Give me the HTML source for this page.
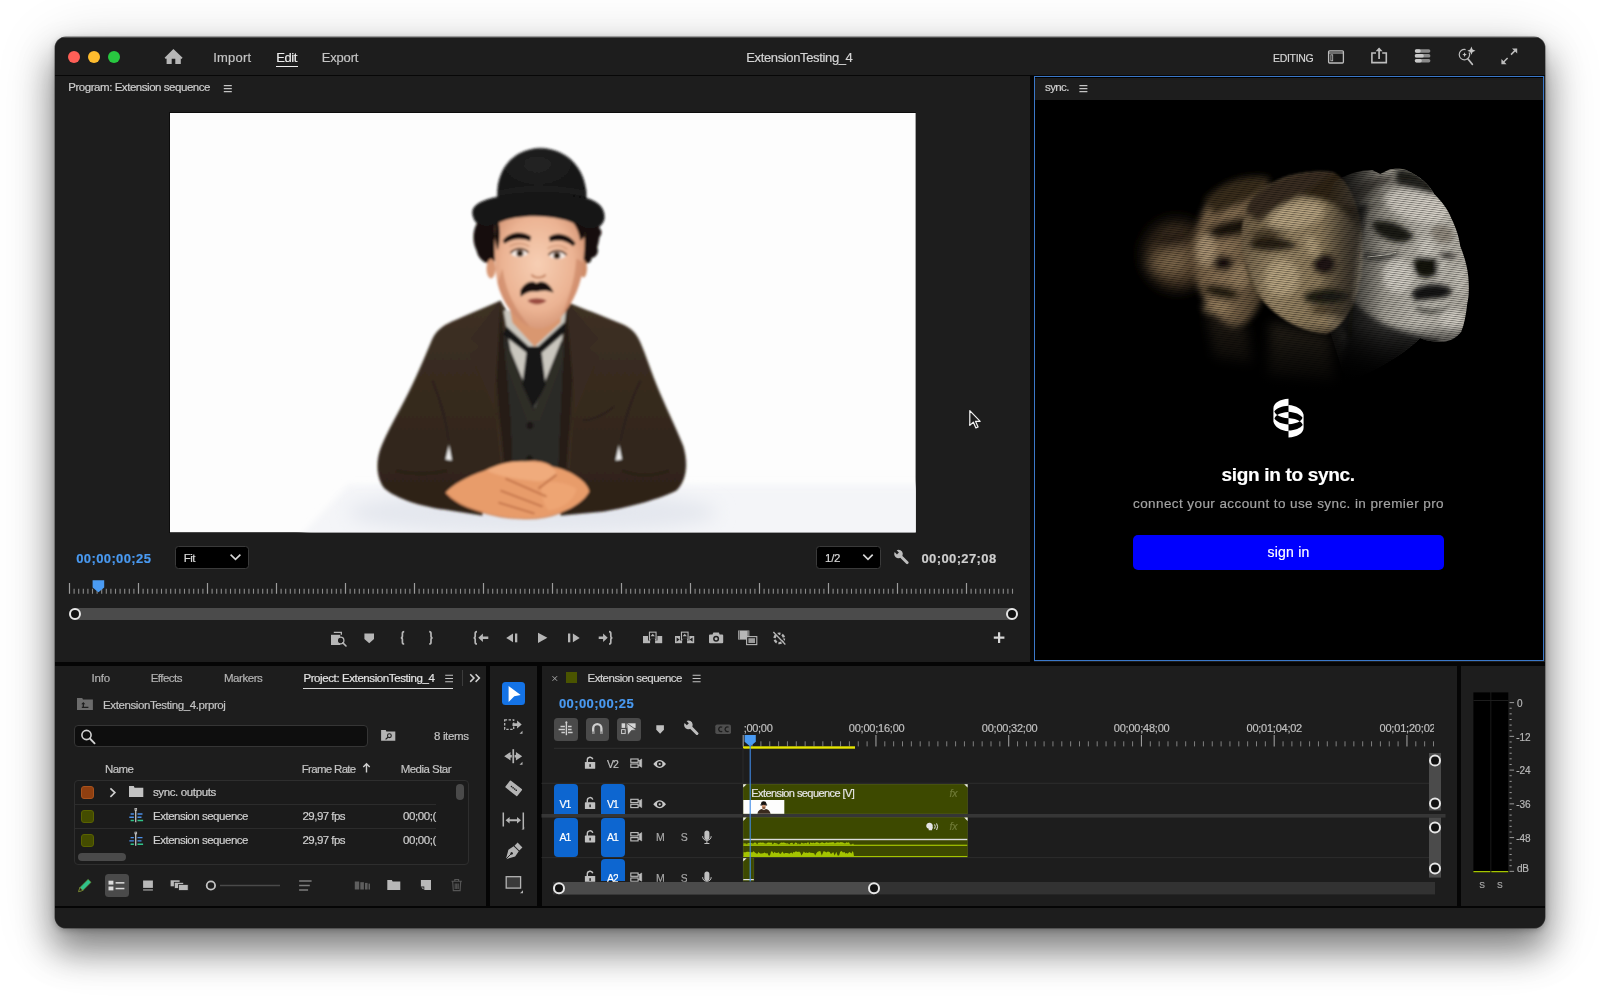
<!DOCTYPE html>
<html lang="en">
<head>
<meta charset="utf-8">
<title>ExtensionTesting_4</title>
<style>
html,body{margin:0;padding:0;background:#fff;}
body{width:1600px;height:1001px;overflow:hidden;position:relative;font-family:"Liberation Sans",sans-serif;}
#stage{position:absolute;left:0;top:0;width:1600px;height:1001px;overflow:hidden;}
.a{position:absolute;}
.t{position:absolute;white-space:pre;line-height:1;font-family:"Liberation Sans",sans-serif;-webkit-text-stroke:.18px;}
#win{position:absolute;left:55px;top:37px;width:1490px;height:891px;border-radius:11px;background:#1d1d1d;
 box-shadow:0 0 0 0.5px rgba(0,0,0,.55),0 2px 6px rgba(0,0,0,.25),0 22px 34px 2px rgba(0,0,0,.42),0 10px 60px rgba(0,0,0,.18);}
#clip{position:absolute;left:55px;top:37px;width:1490px;height:891px;border-radius:11px;overflow:hidden;}
#clip .i{position:absolute;left:-55px;top:-37px;width:1600px;height:1001px;}
svg{position:absolute;overflow:visible;}
</style>
</head>
<body>
<div id="stage">
<div id="win"></div>
<!-- window chrome: everything positioned in page coordinates, clipped to the rounded window -->
<div id="clip"><div class="i">
 <!-- top highlight -->
 <div class="a" style="left:55px;top:37px;width:1490px;height:1px;background:#5a5a5a;opacity:.8"></div>
 <!-- title bar bottom line -->
 <div class="a" style="left:55px;top:75px;width:1490px;height:1px;background:#070707"></div>
 <!-- traffic lights -->
 <div class="a" style="left:68px;top:50.5px;width:12px;height:12px;border-radius:50%;background:#fe5f57"></div>
 <div class="a" style="left:88px;top:50.5px;width:12px;height:12px;border-radius:50%;background:#febc2e"></div>
 <div class="a" style="left:107.75px;top:50.5px;width:12px;height:12px;border-radius:50%;background:#28c840"></div>
 <!-- Edit underline -->
 <div class="a" style="left:276px;top:65.7px;width:21.5px;height:1.8px;background:#ececec"></div>

 <!-- separators (black gutters) -->
 <div class="a" style="left:55px;top:661.5px;width:1490px;height:4.5px;background:#050505"></div>
 <div class="a" style="left:1029.5px;top:76px;width:4px;height:586px;background:#050505"></div>
 <div class="a" style="left:486px;top:666px;width:4px;height:240px;background:#050505"></div>
 <div class="a" style="left:537px;top:666px;width:4.5px;height:240px;background:#050505"></div>
 <div class="a" style="left:1457.3px;top:666px;width:4px;height:240px;background:#050505"></div>
 <div class="a" style="left:55px;top:905.5px;width:1490px;height:2px;background:#050505"></div>

 <!-- program monitor: video frame placeholder -->
 <div class="a" style="left:169.5px;top:112.5px;width:745.8px;height:419.5px;background:#fdfdfd;box-shadow:0 0 0 1px #0c0c0c"></div>

 <!-- Fit dropdown -->
 <div class="a" style="left:175px;top:546.3px;width:73.7px;height:22.4px;box-sizing:border-box;background:#000;border:1px solid #3a3a3a;border-radius:3.5px"></div>
 <!-- 1/2 dropdown -->
 <div class="a" style="left:816.4px;top:546.3px;width:64.6px;height:22.4px;box-sizing:border-box;background:#000;border:1px solid #3a3a3a;border-radius:3.5px"></div>
 <!-- program scrollbar -->
 <div class="a" style="left:69px;top:607.8px;width:949px;height:12.6px;background:#4b4b4b;border-radius:6px"></div>
 <div class="a" style="left:69px;top:608px;width:12px;height:12px;box-sizing:border-box;border:2px solid #e6e6e6;border-radius:50%;background:#111"></div>
 <div class="a" style="left:1005.5px;top:608px;width:12px;height:12px;box-sizing:border-box;border:2px solid #e6e6e6;border-radius:50%;background:#111"></div>

 <!-- sync panel -->
 <div class="a" style="left:1033.5px;top:76.5px;width:1510.5px;height:0"></div>
 <div class="a" style="left:1033.5px;top:76.3px;width:510.5px;height:585px;box-sizing:border-box;border:1.3px solid #3b78c9;background:#000"></div>
 <div class="a" style="left:1034.8px;top:77.6px;width:507.9px;height:22.4px;background:#1d1d1d"></div>
 <div class="a" style="left:1133px;top:534.9px;width:311px;height:35.1px;border-radius:5px;background:#0000fe"></div>

 <!-- project panel -->
 <div class="a" style="left:303px;top:687.6px;width:150px;height:1.5px;background:#d8d8d8"></div>
 <div class="a" style="left:462.3px;top:670px;width:1px;height:16px;background:#3c3c3c"></div>
 <div class="a" style="left:73.7px;top:724.6px;width:294.8px;height:22.9px;box-sizing:border-box;background:#0e0e0e;border:1px solid #353535;border-radius:4px"></div>
 <div class="a" style="left:73.7px;top:779.6px;width:394.9px;height:85.3px;box-sizing:border-box;background:#1b1b1b;border:1px solid #2e2e2e;border-radius:4px"></div>
 <div class="a" style="left:75px;top:804.2px;width:361px;height:1px;background:#2c2c2c"></div>
 <div class="a" style="left:75px;top:828px;width:361px;height:1px;background:#2c2c2c"></div>
 <div class="a" style="left:81px;top:786px;width:13px;height:13px;box-sizing:border-box;border-radius:3px;background:#8f3f10;border:1px solid #a8521d"></div>
 <div class="a" style="left:81px;top:810px;width:13px;height:13px;box-sizing:border-box;border-radius:3px;background:#444c00;border:1px solid #596200"></div>
 <div class="a" style="left:81px;top:833.7px;width:13px;height:13px;box-sizing:border-box;border-radius:3px;background:#444c00;border:1px solid #596200"></div>
 <div class="a" style="left:78.4px;top:853px;width:48px;height:7.8px;border-radius:4px;background:#4a4a4a"></div>
 <div class="a" style="left:456px;top:784px;width:8px;height:16px;border-radius:4px;background:#4a4a4a"></div>
 <div class="a" style="left:104.5px;top:874px;width:24px;height:23px;border-radius:3.5px;background:#4a4a4a"></div>

 <!-- tools panel -->
 <div class="a" style="left:501.8px;top:681.8px;width:23.7px;height:23.7px;border-radius:3.5px;background:#1473e6"></div>
</div></div>
<!-- program monitor video frame (illustration) -->
<svg style="left:169.5px;top:112.5px" width="745.8" height="419.5" viewBox="169.5 112.5 745.8 419.5">
<defs>
 <clipPath id="vclip"><rect x="169.5" y="112.500" width="745.8" height="419.500"/></clipPath>
 <filter id="b1" x="-10%" y="-10%" width="120%" height="120%"><feGaussianBlur stdDeviation="0.8"/></filter>
 <filter id="b3" x="-20%" y="-20%" width="140%" height="140%"><feGaussianBlur stdDeviation="3"/></filter>
 <filter id="b8" x="-30%" y="-30%" width="160%" height="160%"><feGaussianBlur stdDeviation="9"/></filter>
 <linearGradient id="jk" x1="0" y1="0" x2="0" y2="1"><stop offset="0" stop-color="#3e3124"/><stop offset="1" stop-color="#2d2218"/></linearGradient>
 <radialGradient id="skin" cx=".48" cy=".45" r=".6"><stop offset="0" stop-color="#f7cfb4"/><stop offset=".65" stop-color="#ecb494"/><stop offset="1" stop-color="#d29272"/></radialGradient>
 <radialGradient id="hat" cx=".45" cy=".3" r=".8"><stop offset="0" stop-color="#242424"/><stop offset="1" stop-color="#0e0e0e"/></radialGradient>
</defs>
<g clip-path="url(#vclip)">
 <rect x="169.5" y="112.500" width="745.8" height="419.500" fill="#fdfdfd"/>
 <!-- table -->
 <path d="M348 484 L930 484 L930 540 L296 540 Z" fill="#f4f5f8" filter="url(#b3)"/>
 <!-- table shadow -->
 <ellipse cx="532" cy="512" rx="185" ry="22" fill="#e4e7ee" filter="url(#b8)"/>
 <g filter="url(#b1)">
 <!-- jacket body + arms -->
 <path id="jacket" fill="url(#jk)" d="M500 300 C486 306 470 313 456 319 C444 324 437 328 432 338 C426 352 418 372 408 392 C398 412 386 432 380 448 C375 462 376 478 384 488 C396 498 420 506 444 509 L482 515 L482 482 L560 482 L560 515 L603 511 C632 506 660 498 676 490 C686 480 688 464 683 446 C676 428 664 404 656 384 C648 364 644 350 638 338 C634 330 628 326 618 322 C604 316 582 308 566 301 L548 330 L518 330 Z"/>
 <!-- sleeve folds -->
 <path d="M432 380 C440 400 446 420 448 440 M640 380 C630 400 624 420 620 440 M396 470 C410 474 430 474 446 470 M668 470 C654 476 636 476 622 470" stroke="#2a2019" stroke-width="2.400" fill="none" opacity=".7"/>
 <!-- breast pocket -->
 <path d="M582 420 C592 420 604 414 614 406" stroke="#2a2019" stroke-width="1.600" fill="none"/>
 <!-- white gaps between arm and torso -->
 <path d="M445 459 L448.500 444 L451.500 460 Z" fill="#f0f0f0"/>
 <path d="M615 460 L618.500 444 L621.500 459 Z" fill="#f0f0f0"/>
 <!-- vest -->
 <path d="M503 330 L562 330 L566 400 L562 468 L502 468 L500 400 Z" fill="#2b2925"/>
 <!-- shirt -->
 <path d="M503 310 L566 310 L560 350 L534 408 L510 350 Z" fill="#c9c6be"/>
 <!-- vest lapel V -->
 <path d="M504 340 L533 410 L561 340 L566 352 L540 420 L526 420 L500 352 Z" fill="#2f2d28"/>
 <!-- tie -->
 <path d="M506 326 L528 346 L538 346 L564 322 L566 330 L541 352 L545 384 L533 408 L522 384 L526 352 L503 334 Z" fill="#161616"/>
 <!-- lapels (slightly lighter) -->
 <path d="M500 300 L470 338 L480 346 L470 354 L498 420 L512 468 L500 468 L494 400 Z" fill="#392c20"/>
 <path d="M566 301 L598 338 L588 348 L598 356 L572 420 L560 468 L570 468 L574 400 Z" fill="#392c20"/>
 <!-- jacket inner shading -->
 <path d="M500 304 L503 336 L510 420 L512 468 L504 468 L496 380 Z" fill="#261e18"/>
 <path d="M566 304 L564 336 L560 420 L558 468 L566 468 L572 380 Z" fill="#261e18"/>
 <!-- buttons -->
 <circle cx="529.500" cy="425" r="3.200" fill="#1a1816"/><circle cx="529" cy="458" r="3" fill="#1a1816"/>
 <!-- hands -->
 <path d="M445 492 C452 484 466 476 484 470 C498 463 512 460 524 461 C534 459 546 461 552 466 C562 468 572 472 578 477 C584 481 588 486 589 491 C584 500 574 507 561 512 C548 517 534 519 520 518 C504 518 488 514 476 510 C462 506 450 499 445 492 Z" fill="#e89c6b"/>
 <path d="M486 470 C500 462 520 459 536 462 C548 463 556 468 556 474 C550 480 540 482 530 480 C514 478 498 476 486 470 Z" fill="#f0ab7c"/>
 <path d="M541 482 C554 480 566 482 576 488 C574 500 562 508 548 510 C542 502 540 492 541 482 Z" fill="#efa876" opacity=".8"/>
 <path d="M505 478 L546 496 M500 490 L542 506 M498 502 L534 513 M556 474 L538 488" stroke="#b9683f" stroke-width="1.700" fill="none" opacity=".85"/>
 <path d="M445 492 C452 499 462 506 476 510 C488 514 504 518 520 518 C534 519 548 517 561 512" stroke="#c47a4e" stroke-width="1.500" fill="none" opacity=".6"/>
 <!-- neck -->
 <path d="M508 300 L562 300 L560 322 L534 346 L512 322 Z" fill="#d9976f"/>
 <!-- hair -->
 <path d="M480 218 C472 226 471 240 476 250 C478 258 484 264 490 262 C494 262 497 258 497 252 L502 226 L574 224 L578 254 C578 262 584 264 588 260 C594 256 598 246 599 236 C600 226 597 218 592 214 Z" fill="#17100c"/>
 <circle cx="479" cy="236" r="6" fill="#17100c"/><circle cx="483" cy="252" r="6" fill="#17100c"/><circle cx="595" cy="232" r="6" fill="#17100c"/><circle cx="590" cy="250" r="7.500" fill="#17100c"/><circle cx="586" cy="258" r="5" fill="#17100c"/><circle cx="577" cy="226" r="6" fill="#17100c"/>
 <!-- ears -->
 <ellipse cx="490.500" cy="268" rx="4.500" ry="10" fill="#d99874"/><ellipse cx="583" cy="268" rx="3.500" ry="9" fill="#cf8c68"/>
 <!-- face -->
 <path d="M496 212 C493 236 493 262 497 282 C501 300 513 318 529 326 C540 331 551 327 561 316 C573 302 581 284 583 262 C585 244 585 226 581 210 Z" fill="url(#skin)"/>
 <path d="M560 212 C570 216 578 226 580 240 L584 236 L584 212 Z" fill="#17100c"/>
 <path d="M496 214 C500 226 500 238 497 250 L494 236 Z" fill="#17100c"/>
 <!-- face side shading -->
 <path d="M497 282 C501 300 513 318 529 326 C518 312 506 296 502 268 Z" fill="#c98462" opacity=".6"/>
 <path d="M583 262 C581 284 573 302 561 316 C568 298 574 282 576 258 Z" fill="#c98462" opacity=".6"/>
 <!-- eyebrows -->
 <path d="M502.500 240 C509 231 522 230 530.500 236 L529.500 240.500 C521 236.500 511 238 504 243 Z" fill="#160f0b"/>
 <path d="M548.500 236.500 C557 230.500 569 234 575 243 L572.500 245.500 C566 239.500 558 238.500 549.500 241 Z" fill="#160f0b"/>
 <!-- eyes -->
 <path d="M510.500 253.500 C515 248 523 248 527.500 253 C523 257.500 515 257.500 510.500 253.500 Z" fill="#f6ece6"/><circle cx="519.400" cy="252.800" r="3.300" fill="#2c1a10"/>
 <path d="M548.500 255.500 C553 250 561 250 565.500 255.500 C561 259.500 553 259.500 548.500 255.500 Z" fill="#f6ece6"/><circle cx="556.400" cy="255" r="3.300" fill="#2c1a10"/>
 <path d="M510 252.500 C515 247 523 247 528 252 M548 254.500 C553 249 561 249 566 254.500" stroke="#3a2216" stroke-width="1.500" fill="none"/>
 <path d="M509 246 C515 242 523 242 529 246 M547 248 C553 244 561 244 567 249" stroke="#c08462" stroke-width="1.400" fill="none" opacity=".7"/>
 <!-- nose shadow -->
 <path d="M531 274 C534 278 542 278 545 274" stroke="#b87452" stroke-width="1.600" fill="none"/>
 <!-- moustache -->
 <path d="M520 290 C524 282 532 279 536 283 C541 279 549 282 553 292 C546 289 541 290 536 291 C531 290 526 291 520 296 Z" fill="#130d0a"/>
 <!-- mouth -->
 <path d="M527 300 C532 297 540 297 546 300 C541 305 532 305 527 300 Z" fill="#9a4c40"/>
 <!-- hat -->
 <path d="M497 200 C494 170 512 148 540 147.500 C568 148 588 170 586 202 Z" fill="url(#hat)"/>
 <path d="M472 214 C470 206 480 199 498 196 C520 192 562 192 584 197 C598 200 605 208 604 218 C602 228 590 232 580 226 C562 214 520 212 498 222 C486 230 474 226 472 214 Z" fill="#121212"/>
 <path d="M497 196 C520 190 564 190 586 197 L586 190 C562 184 520 184 497 190 Z" fill="#1e1e1e"/>
 </g>
</g>
</svg>
<!-- mouse cursor -->
<svg style="left:966px;top:408px" width="18" height="24" viewBox="0 0 18 24"><path d="M3.800 2.600v14.800l3.500-3.300l2.600 5.800l2.200-1l-2.600-5.600h4.700z" fill="#1b1b1b" stroke="#f2f2f2" stroke-width="1.200" stroke-linejoin="round"/></svg>
<!-- sync panel hero image (blurred motion faces) + logo -->
<svg style="left:1034.800px;top:100px" width="507.900" height="330" viewBox="1034.800 100 507.900 330">
<defs>
 <filter id="f1" x="-30%" y="-30%" width="160%" height="160%"><feGaussianBlur stdDeviation="1"/></filter>
 <filter id="f2" x="-30%" y="-30%" width="160%" height="160%"><feGaussianBlur stdDeviation="2.400"/></filter>
 <filter id="f3" x="-30%" y="-30%" width="160%" height="160%"><feGaussianBlur stdDeviation="3.400"/></filter>
 <filter id="f5" x="-40%" y="-40%" width="180%" height="180%"><feGaussianBlur stdDeviation="5.500"/></filter>
 <radialGradient id="h1" cx=".5" cy=".55" r=".55"><stop offset="0" stop-color="#8f7556"/><stop offset=".55" stop-color="#59452f"/><stop offset="1" stop-color="#150f09" stop-opacity="0"/></radialGradient>
 <linearGradient id="h2" x1="0" y1="0" x2="1" y2=".2"><stop offset="0" stop-color="#6a563d"/><stop offset=".5" stop-color="#92795a"/><stop offset="1" stop-color="#4c3e2b"/></linearGradient>
 <linearGradient id="h3" x1="0" y1="0" x2="1" y2=".25"><stop offset="0" stop-color="#5a4a35"/><stop offset=".4" stop-color="#9f8c6b"/><stop offset=".75" stop-color="#917e5e"/><stop offset="1" stop-color="#4a3d2c"/></linearGradient>
 <linearGradient id="h4" x1="0" y1=".3" x2="1" y2=".55"><stop offset="0" stop-color="#3c3a35" stop-opacity=".55"/><stop offset=".3" stop-color="#8e8a80"/><stop offset=".7" stop-color="#c6c2b8"/><stop offset="1" stop-color="#b4b0a6"/></linearGradient>
 <linearGradient id="fade" x1="0" y1="0" x2="0" y2="1"><stop offset="0" stop-color="#000" stop-opacity="0"/><stop offset="1" stop-color="#000" stop-opacity="1"/></linearGradient>
 <pattern id="scan" width="6" height="2.200" patternUnits="userSpaceOnUse" patternTransform="rotate(7)"><rect width="6" height=".85" fill="#000" opacity=".42"/></pattern>
 <linearGradient id="m4g" x1="1318" y1="0" x2="1384" y2="0" gradientUnits="userSpaceOnUse"><stop offset="0" stop-color="#fff" stop-opacity="0"/><stop offset=".35" stop-color="#fff" stop-opacity=".35"/><stop offset="1" stop-color="#fff" stop-opacity="1"/></linearGradient>
 <mask id="m4" maskUnits="userSpaceOnUse" x="1300" y="150" width="200" height="260"><rect x="1300" y="150" width="200" height="260" fill="url(#m4g)"/><rect x="1300" y="326" width="200" height="54" fill="url(#fade)"/><rect x="1300" y="379.500" width="200" height="40" fill="#000"/></mask>
 <clipPath id="c3"><path d="M1244 215 C1252 186 1290 168 1332 172 C1356 184 1366 230 1362 270 C1358 300 1346 326 1326 334 C1298 332 1268 314 1252 286 C1242 262 1238 238 1244 215 Z"/></clipPath>
 <clipPath id="c4"><path d="M1334 182 C1346 174 1360 170 1372 170 L1380 174 L1388 170 C1396 168 1402 169 1406 170 C1420 176 1430 186 1434 194 C1442 202 1448 210 1451 218 C1456 228 1459 238 1460 246 C1464 256 1467 266 1468 276 C1469 286 1469 296 1467 304 C1466 314 1464 324 1461 332 C1456 338 1450 341 1443 342 C1432 342 1424 340 1420 338 C1400 358 1368 374 1346 382 L1330 332 C1322 300 1318 262 1320 248 C1321 224 1326 200 1334 182 Z"/></clipPath>
</defs>
<!-- head 1: far left, blurry -->
<g filter="url(#f5)" opacity=".9">
 <ellipse cx="1176" cy="252" rx="40" ry="42" fill="url(#h1)" transform="rotate(-15 1176 252)"/>
 <ellipse cx="1174" cy="240" rx="20" ry="6" fill="#150f08" transform="rotate(-10 1174 240)"/>
 <ellipse cx="1166" cy="264" rx="18" ry="10" fill="#9a805e" opacity=".6"/>
</g>
<!-- head 2 -->
<g filter="url(#f3)">
 <path d="M1200 218 C1208 190 1238 174 1266 178 C1278 200 1274 250 1264 292 C1258 312 1246 328 1232 328 C1214 320 1200 298 1194 272 C1190 252 1193 234 1200 218 Z" fill="url(#h2)"/>
 <path d="M1204 200 C1222 180 1250 172 1270 178 C1262 196 1240 204 1214 216 Z" fill="#3a2d1e"/>
 <ellipse cx="1232" cy="228" rx="26" ry="9" fill="#1d140b" transform="rotate(-14 1232 228)"/>
 <ellipse cx="1223" cy="263" rx="11" ry="8" fill="#160f08"/>
 <ellipse cx="1221" cy="292" rx="18" ry="7" fill="#241a10" transform="rotate(12 1221 292)"/>
 <ellipse cx="1206" cy="250" rx="10" ry="16" fill="#b8a07e" opacity=".8"/>
 <ellipse cx="1240" cy="276" rx="10" ry="12" fill="#a48c6a" opacity=".7"/>
 <ellipse cx="1216" cy="308" rx="14" ry="8" fill="#9c8462" opacity=".7"/>
</g>
<!-- head 3 -->
<g filter="url(#f1)"><g clip-path="url(#c3)">
 <rect x="1236" y="166" width="132" height="172" fill="url(#h3)"/>
 <g filter="url(#f2)">
  <path d="M1240 206 C1264 176 1310 162 1344 172 C1326 188 1290 194 1258 222 Z" fill="#3a2e20"/>
  <path d="M1250 241 C1264 233 1284 236 1298 246 C1284 252 1262 252 1250 247 Z" fill="#1e160d" opacity=".9"/><ellipse cx="1270" cy="232" rx="20" ry="5" fill="#3a2d1e" opacity=".7" transform="rotate(-8 1270 232)"/>
  <path d="M1300 196 C1326 196 1350 210 1362 236 L1366 190 L1340 168 Z" fill="#332819"/>
  <ellipse cx="1324" cy="264" rx="11" ry="10" fill="#17110a" opacity=".92"/><ellipse cx="1312" cy="246" rx="6" ry="12" fill="#c9b590" opacity=".6" transform="rotate(-20 1312 246)"/>
  <path d="M1304 295 C1318 286 1338 287 1352 296 C1340 306 1318 307 1304 300 Z" fill="#1a130b" opacity=".92"/><ellipse cx="1326" cy="311" rx="16" ry="4" fill="#3a2d1e" opacity=".7" transform="rotate(6 1326 311)"/>
  <ellipse cx="1296" cy="216" rx="28" ry="13" fill="#c4b08c" opacity=".75" transform="rotate(-14 1296 216)"/>
  <ellipse cx="1282" cy="278" rx="17" ry="18" fill="#c2ae8a" opacity=".8"/>
  <ellipse cx="1330" cy="322" rx="16" ry="7" fill="#a8926e" opacity=".6"/>
  <path d="M1244 262 C1250 290 1270 316 1300 332 L1250 340 L1236 270 Z" fill="#20180f" opacity=".8"/>
 </g>
</g></g>
<!-- head 4: right, sharp, pale -->
<g mask="url(#m4)"><g clip-path="url(#c4)">
 <rect x="1316" y="166" width="158" height="216" fill="url(#h4)"/>
 <g filter="url(#f2)">
  <!-- hair streaks on top -->
  <path d="M1396 170 C1412 168 1430 178 1440 194 C1426 192 1408 188 1396 184 Z" fill="#24221e"/>
  <path d="M1336 200 C1352 182 1378 174 1396 176 C1382 186 1358 196 1346 214 Z" fill="#4a4740" opacity=".85"/>
  <path d="M1350 198 C1370 184 1398 178 1424 184 M1346 208 C1368 192 1400 186 1434 194 M1346 220 C1366 204 1394 198 1418 200" stroke="#3a3833" stroke-width="2" fill="none" opacity=".6"/>
  <!-- eye socket wedge -->
  <path d="M1372 222 C1386 218 1402 224 1414 236 C1408 244 1396 244 1384 238 C1376 234 1372 228 1372 222 Z" fill="#1b1a17"/>
  <path d="M1364 252 C1376 256 1388 255 1398 251 L1398 256 C1388 262 1372 262 1364 258 Z" fill="#3a3834" opacity=".8"/>
  <!-- temple shading right -->
  <ellipse cx="1442" cy="234" rx="12" ry="9" fill="#7a7264" opacity=".6" transform="rotate(20 1442 234)"/>
  <path d="M1440 254 C1446 252 1452 253 1457 256 C1452 259 1445 259 1440 257 Z" fill="#34322e"/>
  <!-- nose -->
  <path d="M1413 262 C1418 254 1430 256 1440 262 C1441 272 1434 278 1424 278 C1416 276 1412 270 1413 262 Z" fill="#151411"/>
  <ellipse cx="1441" cy="266" rx="4" ry="6" fill="#d8d4ca" opacity=".8"/>
  <!-- lips -->
  <path d="M1411 292 C1422 282 1442 282 1453 290 C1448 300 1428 302 1414 300 Z" fill="#161512"/>
  <path d="M1416 306 C1428 310 1442 310 1452 305 C1446 314 1426 316 1416 310 Z" fill="#3a3834" opacity=".85"/>
  <!-- jaw / neck in shadow -->
  <path d="M1352 300 C1372 322 1400 334 1440 340 L1420 386 L1338 386 Z" fill="#1c1b18" opacity=".8"/>
  <!-- highlights -->
  <ellipse cx="1416" cy="206" rx="32" ry="15" fill="#dedad0" opacity=".8" transform="rotate(16 1416 206)"/>
  <ellipse cx="1398" cy="276" rx="15" ry="17" fill="#dad6cc" opacity=".85"/>
  <ellipse cx="1426" cy="248" rx="7" ry="9" fill="#d8d4ca" opacity=".8"/>
  <ellipse cx="1452" cy="320" rx="12" ry="11" fill="#d8d4ca" opacity=".85"/>
  <ellipse cx="1460" cy="280" rx="6" ry="14" fill="#d0ccc2" opacity=".75"/>
  <ellipse cx="1434" cy="304" rx="12" ry="3" fill="#c8c4ba" opacity=".8"/>
  <!-- left side into shadow -->
  <path d="M1326 206 C1318 236 1316 262 1324 294 C1332 318 1342 334 1352 340 C1352 300 1356 250 1368 204 Z" fill="#14130f" opacity=".7"/>
 </g>
 <path d="M1367 257 C1377 256 1388 254.500 1396 252.500" stroke="#e0dcd0" stroke-width="1" fill="none" opacity=".8"/>
</g></g>
<!-- necks fading down -->
<g filter="url(#f5)" opacity=".5">
 <path d="M1270 322 L1330 336 L1334 384 L1268 378 Z" fill="#4e4232"/>
 <path d="M1206 312 L1246 326 L1252 364 L1214 358 Z" fill="#403526"/>
</g>
<!-- scanline texture -->
<rect x="1120" y="150" width="370" height="260" fill="url(#scan)"/>
<!-- bottom fade -->
<rect x="1034.800" y="322" width="507.900" height="70" fill="url(#fade)"/>
<rect x="1034.800" y="391.500" width="507.900" height="40" fill="#000"/>
</svg>
<!-- sync logo -->
<svg style="left:1268px;top:394px" width="42" height="48" viewBox="1268 394 42 48">
 <g id="lg" fill="#fff">
  <path d="M1288.500 398.800 C1280 399.200 1273.400 403 1273.400 408.500 L1273.400 421.500 C1274.500 427 1281 430.800 1288.500 431.200 L1288.500 424.600 C1282 424.200 1276.500 422 1274.500 418.600 C1275 417 1276 416 1277.200 415 C1280 416.800 1284 418 1288.500 418.300 L1288.500 412 C1284 412.200 1280 413.200 1277.200 415 C1276 414 1275 413 1274.300 411.400 C1276.500 408.300 1282 406 1288.500 405.700 Z"/>
 </g>
 <use href="#lg" transform="rotate(180 1288.500 418.150)"/>
</svg>
<!-- rulers, timeline, audio meter -->
<div id="clip2" style="position:absolute;left:0;top:0;width:1600px;height:1001px">
<svg style="left:0;top:0" width="1600" height="1001" viewBox="0 0 1600 1001">
<path d="M69.50 583V593.8M138.50 583V593.8M207.50 583V593.8M276.50 583V593.8M345.50 583V593.8M414.50 583V593.8M483.50 583V593.8M552.50 583V593.8M621.50 583V593.8M690.50 583V593.8M759.50 583V593.8M828.50 583V593.8M897.50 583V593.8M966.50 583V593.8" stroke="#9c9c9c" stroke-width="1.2" fill="none"/>
<path d="M74.10 588.8V593.8M78.70 588.8V593.8M83.30 588.8V593.8M87.90 588.8V593.8M92.50 588.8V593.8M97.10 588.8V593.8M101.70 588.8V593.8M106.30 588.8V593.8M110.90 588.8V593.8M115.50 588.8V593.8M120.10 588.8V593.8M124.70 588.8V593.8M129.30 588.8V593.8M133.90 588.8V593.8M143.10 588.8V593.8M147.70 588.8V593.8M152.30 588.8V593.8M156.90 588.8V593.8M161.50 588.8V593.8M166.10 588.8V593.8M170.70 588.8V593.8M175.30 588.8V593.8M179.90 588.8V593.8M184.50 588.8V593.8M189.10 588.8V593.8M193.70 588.8V593.8M198.30 588.8V593.8M202.90 588.8V593.8M212.10 588.8V593.8M216.70 588.8V593.8M221.30 588.8V593.8M225.90 588.8V593.8M230.50 588.8V593.8M235.10 588.8V593.8M239.70 588.8V593.8M244.30 588.8V593.8M248.90 588.8V593.8M253.50 588.8V593.8M258.10 588.8V593.8M262.70 588.8V593.8M267.30 588.8V593.8M271.90 588.8V593.8M281.10 588.8V593.8M285.70 588.8V593.8M290.30 588.8V593.8M294.90 588.8V593.8M299.50 588.8V593.8M304.10 588.8V593.8M308.70 588.8V593.8M313.30 588.8V593.8M317.90 588.8V593.8M322.50 588.8V593.8M327.10 588.8V593.8M331.70 588.8V593.8M336.30 588.8V593.8M340.90 588.8V593.8M350.10 588.8V593.8M354.70 588.8V593.8M359.30 588.8V593.8M363.90 588.8V593.8M368.50 588.8V593.8M373.10 588.8V593.8M377.70 588.8V593.8M382.30 588.8V593.8M386.90 588.8V593.8M391.50 588.8V593.8M396.10 588.8V593.8M400.70 588.8V593.8M405.30 588.8V593.8M409.90 588.8V593.8M419.10 588.8V593.8M423.70 588.8V593.8M428.30 588.8V593.8M432.90 588.8V593.8M437.50 588.8V593.8M442.10 588.8V593.8M446.70 588.8V593.8M451.30 588.8V593.8M455.90 588.8V593.8M460.50 588.8V593.8M465.10 588.8V593.8M469.70 588.8V593.8M474.30 588.8V593.8M478.90 588.8V593.8M488.10 588.8V593.8M492.70 588.8V593.8M497.30 588.8V593.8M501.90 588.8V593.8M506.50 588.8V593.8M511.10 588.8V593.8M515.70 588.8V593.8M520.30 588.8V593.8M524.90 588.8V593.8M529.50 588.8V593.8M534.10 588.8V593.8M538.70 588.8V593.8M543.30 588.8V593.8M547.90 588.8V593.8M557.10 588.8V593.8M561.70 588.8V593.8M566.30 588.8V593.8M570.90 588.8V593.8M575.50 588.8V593.8M580.10 588.8V593.8M584.70 588.8V593.8M589.30 588.8V593.8M593.90 588.8V593.8M598.50 588.8V593.8M603.10 588.8V593.8M607.70 588.8V593.8M612.30 588.8V593.8M616.90 588.8V593.8M626.10 588.8V593.8M630.70 588.8V593.8M635.30 588.8V593.8M639.90 588.8V593.8M644.50 588.8V593.8M649.10 588.8V593.8M653.70 588.8V593.8M658.30 588.8V593.8M662.90 588.8V593.8M667.50 588.8V593.8M672.10 588.8V593.8M676.70 588.8V593.8M681.30 588.8V593.8M685.90 588.8V593.8M695.10 588.8V593.8M699.70 588.8V593.8M704.30 588.8V593.8M708.90 588.8V593.8M713.50 588.8V593.8M718.10 588.8V593.8M722.70 588.8V593.8M727.30 588.8V593.8M731.90 588.8V593.8M736.50 588.8V593.8M741.10 588.8V593.8M745.70 588.8V593.8M750.30 588.8V593.8M754.90 588.8V593.8M764.10 588.8V593.8M768.70 588.8V593.8M773.30 588.8V593.8M777.90 588.8V593.8M782.50 588.8V593.8M787.10 588.8V593.8M791.70 588.8V593.8M796.30 588.8V593.8M800.90 588.8V593.8M805.50 588.8V593.8M810.10 588.8V593.8M814.70 588.8V593.8M819.30 588.8V593.8M823.90 588.8V593.8M833.10 588.8V593.8M837.70 588.8V593.8M842.30 588.8V593.8M846.90 588.8V593.8M851.50 588.8V593.8M856.10 588.8V593.8M860.70 588.8V593.8M865.30 588.8V593.8M869.90 588.8V593.8M874.50 588.8V593.8M879.10 588.8V593.8M883.70 588.8V593.8M888.30 588.8V593.8M892.90 588.8V593.8M902.10 588.8V593.8M906.70 588.8V593.8M911.30 588.8V593.8M915.90 588.8V593.8M920.50 588.8V593.8M925.10 588.8V593.8M929.70 588.8V593.8M934.30 588.8V593.8M938.90 588.8V593.8M943.50 588.8V593.8M948.10 588.8V593.8M952.70 588.8V593.8M957.30 588.8V593.8M961.90 588.8V593.8M971.10 588.8V593.8M975.70 588.8V593.8M980.30 588.8V593.8M984.90 588.8V593.8M989.50 588.8V593.8M994.10 588.8V593.8M998.70 588.8V593.8M1003.30 588.8V593.8M1007.90 588.8V593.8M1012.50 588.8V593.8" stroke="#8a8a8a" stroke-width="1.1" fill="none"/>
<path d="M92.6 580.2h11.6v7.2l-5.8 4.8l-5.8-4.8z" fill="#4a9bf3"/>
<path d="M743.20 735V746.4M875.95 735V746.4M1008.70 735V746.4M1141.45 735V746.4M1274.20 735V746.4M1406.95 735V746.4" stroke="#9c9c9c" stroke-width="1.1" fill="none"/>
<path d="M752.05 741.3V746.4M760.90 741.3V746.4M769.75 741.3V746.4M778.60 741.3V746.4M787.45 741.3V746.4M796.30 741.3V746.4M805.15 741.3V746.4M814.00 741.3V746.4M822.85 741.3V746.4M831.70 741.3V746.4M840.55 741.3V746.4M849.40 741.3V746.4M858.25 741.3V746.4M867.10 741.3V746.4M884.80 741.3V746.4M893.65 741.3V746.4M902.50 741.3V746.4M911.35 741.3V746.4M920.20 741.3V746.4M929.05 741.3V746.4M937.90 741.3V746.4M946.75 741.3V746.4M955.60 741.3V746.4M964.45 741.3V746.4M973.30 741.3V746.4M982.15 741.3V746.4M991.00 741.3V746.4M999.85 741.3V746.4M1017.55 741.3V746.4M1026.40 741.3V746.4M1035.25 741.3V746.4M1044.10 741.3V746.4M1052.95 741.3V746.4M1061.80 741.3V746.4M1070.65 741.3V746.4M1079.50 741.3V746.4M1088.35 741.3V746.4M1097.20 741.3V746.4M1106.05 741.3V746.4M1114.90 741.3V746.4M1123.75 741.3V746.4M1132.60 741.3V746.4M1150.30 741.3V746.4M1159.15 741.3V746.4M1168.00 741.3V746.4M1176.85 741.3V746.4M1185.70 741.3V746.4M1194.55 741.3V746.4M1203.40 741.3V746.4M1212.25 741.3V746.4M1221.10 741.3V746.4M1229.95 741.3V746.4M1238.80 741.3V746.4M1247.65 741.3V746.4M1256.50 741.3V746.4M1265.35 741.3V746.4M1283.05 741.3V746.4M1291.90 741.3V746.4M1300.75 741.3V746.4M1309.60 741.3V746.4M1318.45 741.3V746.4M1327.30 741.3V746.4M1336.15 741.3V746.4M1345.00 741.3V746.4M1353.85 741.3V746.4M1362.70 741.3V746.4M1371.55 741.3V746.4M1380.40 741.3V746.4M1389.25 741.3V746.4M1398.10 741.3V746.4M1415.80 741.3V746.4M1424.65 741.3V746.4M1433.50 741.3V746.4" stroke="#808080" stroke-width="1" fill="none"/>
<rect x="743" y="746.3" width="112" height="2.4" fill="#e6e600"/>
<path d="M554 748.3H743" stroke="#303030" stroke-width="1"/>
<path d="M541.5 783.3H1429" stroke="#2d2d2d" stroke-width="1"/>
<rect x="541.5" y="814" width="904" height="3.6" fill="#363636"/>
<path d="M541.5 857.6H1429" stroke="#2d2d2d" stroke-width="1"/>
<path d="M743 748V881.5" stroke="#2b2b2b" stroke-width="1"/>
<rect x="743.3" y="784.3" width="224" height="29.4" fill="#3d4900" stroke="#566214" stroke-width="0.6"/>
<rect x="743.3" y="800" width="41" height="13.8" fill="#fdfdfd"/>
<g transform="translate(764 800)"><ellipse cx="-0.3" cy="3.2" rx="2.6" ry="1.9" fill="#141210"/><rect x="-3.6" y="4.3" width="6.8" height="1.1" rx=".5" fill="#141210"/><ellipse cx="-0.2" cy="7" rx="2" ry="2.3" fill="#c98f6c"/><rect x="-1.3" y="7.6" width="2.2" height=".8" fill="#1a120c"/><path d="M-6.6 13.8c.4-3 2.4-4.4 4.4-4.8l2 1 2.2-1c2.4.4 4 2 4.6 4.8z" fill="#3a2a1e"/></g>
<rect x="743.3" y="817.6" width="224" height="39.4" fill="#3d4900" stroke="#566214" stroke-width="0.6"/>
<rect x="743.3" y="838.8" width="224" height="1.4" fill="#dcdcdc"/>
<rect x="743.3" y="844.7" width="224" height="1.2" fill="#a4c400"/>
<rect x="743.3" y="856" width="224" height="1" fill="#a4c400"/>
<path d="M743.5 844.8L743.5 843.17L745.0 843.53L746.1 843.55L747.0 844.41L747.8 843.02L748.8 843.31L750.5 842.80L752.3 843.56L753.4 843.42L754.5 842.46L755.9 842.72L757.2 844.41L758.2 842.66L759.3 842.79L760.4 842.49L761.5 842.81L763.2 842.59L764.9 843.46L766.5 843.41L767.3 842.67L768.7 842.38L770.2 842.78L771.5 842.43L772.7 844.41L774.2 842.70L775.9 843.22L777.3 843.60L778.3 844.41L779.9 843.45L781.1 842.38L782.3 842.84L783.9 842.39L785.1 843.12L786.9 843.41L787.9 843.30L789.3 844.41L790.5 843.10L792.3 842.64L793.7 844.41L795.4 842.51L797.0 843.07L797.9 844.41L798.8 843.33L799.9 844.41L800.9 843.48L801.7 842.38L802.6 843.27L803.8 843.45L805.6 842.96L806.5 843.48L807.5 842.44L808.4 842.27L809.3 844.41L810.6 842.23L812.1 843.26L813.1 842.53L814.7 843.16L816.3 842.22L817.9 842.46L818.9 842.89L819.8 843.59L820.8 842.64L822.1 842.29L823.8 843.11L824.8 843.35L826.3 842.34L827.6 842.70L828.4 842.69L830.0 842.56L831.0 842.50L832.6 842.24L833.8 842.28L834.8 843.45L836.5 842.48L838.1 842.23L839.3 842.85L840.1 842.24L841.4 842.29L843.1 842.45L844.1 843.21L845.5 843.26L846.4 842.33L847.7 842.80L848.9 842.32L850.2 844.41L851.5 844.41L853.1 843.38L854 844.8Z" fill="#a4c400"/>
<path d="M743.5 856.2L743.5 852.27L744.8 852.27L745.7 852.26L746.8 851.65L748.2 851.69L749.4 852.11L750.7 851.88L752.1 852.49L753.6 851.35L754.6 852.26L756.3 853.47L757.5 853.65L758.4 851.95L760.1 853.42L761.5 853.45L763.3 853.23L764.5 852.47L766.1 853.40L767.4 852.89L768.6 855.42L769.9 855.42L771.0 852.08L771.9 851.04L773.7 853.56L774.5 851.63L775.4 852.65L777.1 853.12L778.8 852.23L779.7 853.70L780.9 853.65L782.3 851.57L784.0 853.67L785.2 852.89L787.0 853.09L788.3 853.18L789.3 853.72L790.4 852.99L791.5 852.43L792.6 853.81L793.4 851.76L794.4 852.50L795.3 851.52L796.6 851.47L797.9 851.89L799.1 851.48L800.5 852.70L801.4 855.42L802.9 853.13L803.8 851.45L805.2 853.05L806.3 852.55L807.6 853.11L809.4 852.30L811.1 852.97L811.9 852.77L813.2 853.29L814.0 853.10L815.2 855.42L816.3 853.19L817.7 851.71L819.2 851.35L820.3 851.04L821.8 855.42L823.5 851.31L825.0 851.54L826.3 852.42L827.9 851.50L829.6 851.91L830.7 853.77L831.8 853.56L833.2 852.06L834.7 855.42L836.3 851.72L837.6 855.42L839.1 855.42L840.2 851.77L841.7 851.07L842.9 852.49L844.5 852.10L845.4 853.44L846.9 852.99L847.7 853.69L849.2 851.88L850.3 852.38L851.5 853.52L852.5 851.06L853.4 852.55L854 856.2Z" fill="#a4c400"/>
<rect x="743.3" y="858.2" width="10.5" height="22.8" fill="#3d4900" stroke="#566214" stroke-width="0.6"/>
<rect x="743.3" y="879" width="10.5" height="1.2" fill="#dcdcdc"/>
<path d="M743.2 784.2h3.4l-3.4 3.4z" fill="#f0f0f0"/>
<path d="M967.6 784.2h-3.4l3.4 3.4z" fill="#f0f0f0"/>
<path d="M743.2 817.6h3.4l-3.4 3.4z" fill="#f0f0f0"/>
<path d="M967.6 817.6h-3.4l3.4 3.4z" fill="#f0f0f0"/>
<path d="M743.2 858.2h3.4l-3.4 3.4z" fill="#f0f0f0"/>
<g fill="#e4e4e4"><path d="M926.2 826.2a3.3 3.3 0 1 1 6.4 .9l.5 1.5h-1v1.6h-3.4v-1.4a3.3 3.3 0 0 1-2.5-2.6z"/></g><path d="M934.6 824.4q1.3 2 0 4.4M936.6 823.4q2 3.2 0 6.6" stroke="#e4e4e4" stroke-width="1" fill="none"/>
<path d="M744.6 735h11.2v6.8l-5.6 4.6l-5.6-4.6z" fill="#4a9bf3"/>
<path d="M750.2 744V881.5" stroke="#3f8ae6" stroke-width="1.1"/>
<rect x="553" y="882" width="882" height="12.4" fill="#323232"/>
<rect x="553" y="882" width="327" height="12.4" rx="6.2" fill="#4b4b4b"/>
<circle cx="559" cy="888.2" r="5" fill="#111" stroke="#e6e6e6" stroke-width="2"/>
<circle cx="874" cy="888.2" r="5" fill="#111" stroke="#e6e6e6" stroke-width="2"/>
<rect x="1429" y="753" width="12" height="57.5" fill="#4b4b4b"/>
<rect x="1429" y="817.6" width="12" height="60" fill="#4b4b4b"/>
<circle cx="1435" cy="760.6" r="5" fill="#111" stroke="#e6e6e6" stroke-width="2"/>
<circle cx="1435" cy="803.6" r="5" fill="#111" stroke="#e6e6e6" stroke-width="2"/>
<circle cx="1435" cy="827.6" r="5" fill="#111" stroke="#e6e6e6" stroke-width="2"/>
<circle cx="1435" cy="868.6" r="5" fill="#111" stroke="#e6e6e6" stroke-width="2"/>
<rect x="1473.4" y="692.4" width="17" height="180" fill="#000"/>
<rect x="1491.3" y="692.4" width="17" height="180" fill="#000"/>
<rect x="1473.4" y="700" width="35" height="1" fill="#1d1d1d"/>
<rect x="1473.4" y="871" width="17" height="1.3" fill="#a4c400"/>
<rect x="1491.3" y="871" width="17" height="1.3" fill="#a4c400"/>
<path d="M1509.5 702.60h4.6M1509.5 708.23h2.2M1509.5 713.85h2.2M1509.5 719.48h2.2M1509.5 725.10h2.2M1509.5 730.73h2.2M1509.5 736.35h4.6M1509.5 741.98h2.2M1509.5 747.60h2.2M1509.5 753.23h2.2M1509.5 758.85h2.2M1509.5 764.48h2.2M1509.5 770.10h4.6M1509.5 775.73h2.2M1509.5 781.35h2.2M1509.5 786.98h2.2M1509.5 792.60h2.2M1509.5 798.23h2.2M1509.5 803.85h4.6M1509.5 809.48h2.2M1509.5 815.10h2.2M1509.5 820.73h2.2M1509.5 826.35h2.2M1509.5 831.98h2.2M1509.5 837.60h4.6M1509.5 843.23h2.2M1509.5 848.85h2.2M1509.5 854.48h2.2M1509.5 860.10h2.2M1509.5 865.73h2.2M1509.5 871.35h4.6" stroke="#9a9a9a" stroke-width="1" fill="none"/>
</svg>
<div class="a" style="left:554px;top:784.3px;width:23.5px;height:29.6px;border-radius:4px 4px 0 0;background:#0d66d0"></div>
<div class="a" style="left:601.2px;top:784.3px;width:23.8px;height:29.6px;border-radius:4px 4px 0 0;background:#0d66d0"></div>
<div class="a" style="left:554px;top:818px;width:23.5px;height:39px;border-radius:4px;background:#0d66d0"></div>
<div class="a" style="left:601.2px;top:818px;width:23.8px;height:39px;border-radius:4px;background:#0d66d0"></div>
<div class="a" style="left:601.2px;top:858.8px;width:23.8px;height:22.4px;border-radius:4px 4px 0 0;background:#0d66d0"></div>
<div class="a" style="left:554px;top:717.5px;width:23.5px;height:23.3px;border-radius:3.5px;background:#4a4a4a"></div>
<div class="a" style="left:585.5px;top:717.5px;width:23.5px;height:23.3px;border-radius:3.5px;background:#4a4a4a"></div>
<div class="a" style="left:617px;top:717.5px;width:23.5px;height:23.3px;border-radius:3.5px;background:#4a4a4a"></div>
<div class="a" style="left:566px;top:672px;width:10.8px;height:10.5px;background:#4a5400"></div>
</div>
<!-- icons -->
<svg style="left:0;top:0" width="1600" height="1001" viewBox="0 0 1600 1001">
<g id="ic-title" fill="none" stroke="#bdbdbd" stroke-width="1.3">
 <!-- home -->
 <path d="M173.4 48.9L182.6 57.8L181.4 59L180.8 58.5V64H175.3V58.7H171.7V64H166.6V58.5L165.9 59L164.6 57.8Z" fill="#b6b6b6" stroke="none"/>
 <!-- workspace -->
 <rect x="1328.6" y="50.8" width="14.8" height="12.2" rx="1"/>
 <path d="M1328.6 53H1343.4" stroke-width="1"/>
 <rect x="1330.9" y="54.8" width="1.8" height="6" stroke-width=".8"/>
 <!-- share -->
 <path d="M1376 53H1371.9V62.6H1386.3V53H1382.2" stroke-width="1.6"/>
 <path d="M1379.1 59V48.5" stroke-width="1.7"/>
 <path d="M1375.6 51.3L1379.1 47.4L1382.6 51.3Z" fill="#bdbdbd" stroke="none"/>
 <!-- quick export bars -->
 <g stroke="none">
  <rect x="1414.8" y="49.2" width="15.6" height="3.5" rx="1.7" fill="#8a8a8a"/><rect x="1414.8" y="49.2" width="6" height="3.5" rx="1.7" fill="#c8c8c8"/>
  <rect x="1414.8" y="54.1" width="15.6" height="3.5" rx="1.7" fill="#8a8a8a"/><rect x="1414.8" y="54.1" width="9" height="3.5" rx="1.7" fill="#c8c8c8"/>
  <rect x="1414.8" y="59" width="15.6" height="3.5" rx="1.7" fill="#8a8a8a"/><rect x="1414.8" y="59" width="7" height="3.5" rx="1.7" fill="#c8c8c8"/>
 </g>
 <!-- search sparkle -->
 <path d="M1469.2 52.6A5.2 5.2 0 1 1 1465.6 49.6" stroke-width="1.2"/>
 <path d="M1468 59L1472.3 64.2" stroke-width="1.8" stroke-linecap="round"/>
 <path d="M1471.4 46.6l1.2 2.9 2.9 1.2-2.9 1.2-1.2 2.9-1.2-2.9-2.9-1.2 2.9-1.2z" fill="#c8c8c8" stroke="none"/>
 <path d="M1464.6 52.3l.7 1.6 1.6.7-1.6.7-.7 1.6-.7-1.6-1.6-.7 1.6-.7z" fill="#c8c8c8" stroke="none"/>
 <!-- fullscreen -->
 <path d="M1511 54.6L1516.2 49.4M1507.6 58L1502.4 63.2" stroke-width="1.5"/>
 <path d="M1512 48.4h5.2v5.2zM1501.4 59v5.2h5.2z" fill="#bdbdbd" stroke="none"/>
</g>
<!-- panel menu hamburgers -->
<g stroke="#c4c4c4" stroke-width="1.1" fill="none">
 <path d="M223.8 85.6h8M223.8 88.6h8M223.8 91.6h8"/>
 <path d="M1079.4 85.6h8M1079.4 88.6h8M1079.4 91.6h8"/>
 <path d="M445.2 675.3h7.8M445.2 678.5h7.8M445.2 681.8h7.8"/>
 <path d="M692.6 675.3h8M692.6 678.5h8M692.6 681.8h8"/>
</g>
<!-- dropdown chevrons, wrench, plus -->
<g fill="none" stroke="#d8d8d8" stroke-width="1.6">
 <path d="M230.6 554.6L235.5 559.4L240.4 554.6"/>
 <path d="M863.3 554.6L868 559.4L872.7 554.6"/>
</g>
<g id="wrench"><g transform="translate(898.500 554) rotate(45)" fill="#bdbdbd"><path d="M-4.066 -1.400A4.300 4.300 0 1 1 -4.066 1.400L-.800 1.400L-.800 -1.400Z"/><rect x="3" y="-1.450" width="10.600" height="2.900" rx="1.200"/></g></g>
<path d="M993.8 637.6h10.600M999.100 632.300v10.600" stroke="#d6d6d6" stroke-width="2.200" fill="none"/>
</svg>
<svg style="left:0;top:0" width="1600" height="1001" viewBox="0 0 1600 1001">
<!-- transport controls -->
<g id="ic-transport" fill="#b6b6b6" stroke="none">
 <!-- clip search -->
 <path d="M333.800 631.800h8.200v3h-1.300v-1.700h-6.900z"/>
 <rect x="331" y="634.800" width="9.200" height="10.200"/>
 <circle cx="340.600" cy="640.500" r="3.300" fill="#1d1d1d" stroke="#b6b6b6" stroke-width="1.300"/>
 <path d="M342.900 642.900L346 646" stroke="#b6b6b6" stroke-width="1.600" stroke-linecap="round"/>
 <!-- marker -->
 <path d="M364.400 633.500h9.600v5.400l-4.800 4.400l-4.800-4.400z"/>
 <!-- braces -->
 <g fill="none" stroke="#b6b6b6" stroke-width="1.700">
  <path d="M404.200 631.600q-1.800 0-1.800 1.800v2.600q0 1.800-1.600 1.800q1.600 0 1.600 1.800v2.600q0 1.800 1.800 1.800"/>
  <path d="M429.200 631.600q1.800 0 1.800 1.800v2.600q0 1.800 1.600 1.800q-1.600 0-1.600 1.800v2.600q0 1.800-1.800 1.800"/>
  <path d="M477 631.600q-1.800 0-1.800 1.800v2.600q0 1.800-1.600 1.800q1.600 0 1.600 1.800v2.600q0 1.800 1.800 1.800"/>
  <path d="M609 631.600q1.800 0 1.800 1.800v2.600q0 1.800 1.600 1.800q-1.600 0-1.600 1.800v2.600q0 1.800-1.800 1.800"/>
 </g>
 <!-- go to in -->
 <path d="M478.300 637.800l4.600-4.200v2.900h5.400v2.600h-5.400v2.900z"/>
 <!-- step back -->
 <path d="M506.200 637.900l6.800-4.400v8.800z"/><rect x="515" y="633.500" width="2.300" height="8.800"/>
 <!-- play -->
 <path d="M538 632.700l9.400 5.100l-9.400 5.100z"/>
 <!-- step fwd -->
 <rect x="568" y="633.500" width="2.300" height="8.800"/><path d="M579.700 637.900l-6.800-4.400v8.800z"/>
 <!-- go to out -->
 <path d="M607.700 637.800l-4.600-4.200v2.900h-4.400v2.600h4.400v2.900z"/>
 <!-- lift -->
 <g id="liftic"><rect x="643" y="636" width="7.200" height="7.200"/><rect x="655" y="636" width="7.200" height="7.200"/>
 <rect x="648" y="630.700" width="9.400" height="9.800" fill="#1d1d1d"/><rect x="648.900" y="631.600" width="7.700" height="8.900" fill="#b6b6b6"/><rect x="650" y="632.700" width="5.500" height="6.200" fill="#1d1d1d"/>
 <rect x="650.400" y="639" width="4.700" height="4.300" fill="#1d1d1d"/>
 <path d="M652.750 633.700l2.200 2.600h-4.400z"/></g>
 <!-- extract -->
 <use href="#liftic" x="32"/>
 <path d="M676.600 637.400l3 2.200l-3 2.200zM692.600 637.400l-3 2.200l3 2.200z" fill="#1d1d1d"/>
 <!-- camera -->
 <path d="M713.400 632.500h5.400l.9 2h2.500q1 0 1 1v6.700q0 1-1 1h-12.200q-1 0-1-1v-6.700q0-1 1-1h2.500z"/>
 <circle cx="716.100" cy="638.700" r="3" fill="#1d1d1d"/><circle cx="716.100" cy="638.700" r="1.500"/>
 <!-- comparison view -->
 <rect x="738.100" y="630.500" width="11.200" height="9.100"/><path d="M739.300 630.500v9.100M748.100 630.500v9.100" stroke="#3a3a3a" stroke-width=".8"/>
 <rect x="746.600" y="636.600" width="10.200" height="8" fill="#1d1d1d" stroke="#b6b6b6" stroke-width="1.100"/>
 <rect x="748.400" y="638.200" width="6.600" height="4.800" fill="#9a9a9a"/>
 <!-- proxy toggle -->
 <circle cx="779.300" cy="638.400" r="4.700" fill="none" stroke="#b6b6b6" stroke-width="2.400" stroke-dasharray="3.200 1.700"/>
 <path d="M773.400 632L785.400 644.400" stroke="#b6b6b6" stroke-width="1.400"/>
 <path d="M775.300 631.800L787 643.900" stroke="#1d1d1d" stroke-width="1.200"/>
</g>

<!-- project panel icons -->
<g id="ic-project">
 <!-- folder-up -->
 <path d="M77 698h5.200l.8 1.500h9.900v10.500H77z" fill="#6c6c6c"/>
 <path d="M81.800 707.300h6.600M83.300 707.300v-4.200" stroke="#1d1d1d" stroke-width="1.300" fill="none"/><path d="M81.300 704.300l2-2.400l2 2.400z" fill="#1d1d1d"/>
 <!-- magnifier -->
 <circle cx="86.500" cy="735" r="4.600" fill="none" stroke="#d2d2d2" stroke-width="1.600"/>
 <path d="M89.900 738.500L94.600 743.300" stroke="#d2d2d2" stroke-width="1.800" stroke-linecap="round"/>
 <!-- folder search -->
 <path d="M381.100 730.100h4.600l.7 1.500h8.900v9.200h-14.200z" fill="#b4b4b4"/>
 <circle cx="389.400" cy="735.700" r="1.900" fill="none" stroke="#1d1d1d" stroke-width="1.100"/><path d="M388 737.200l-2.400 2.200" stroke="#1d1d1d" stroke-width="1.200"/>
 <!-- sort arrow -->
 <path d="M366.500 772.500v-8.300M363.300 767l3.200-3.200l3.200 3.200" fill="none" stroke="#d0d0d0" stroke-width="1.400"/>
 <!-- >> -->
 <path d="M470.200 674.300l3.800 3.800l-3.800 3.800M475.600 674.300l3.800 3.800l-3.800 3.800" fill="none" stroke="#cfcfcf" stroke-width="1.500"/>
 <!-- row chevron -->
 <path d="M110.400 788.300l4.500 4.300l-4.500 4.300" fill="none" stroke="#d0d0d0" stroke-width="1.600"/>
 <!-- folder -->
 <path d="M129 786.100h4.800l.7 1.600h8.800v9.200H129z" fill="#c2c2c2"/>
 <!-- sequence icons -->
 <g id="seqic">
  <path d="M135.750 809.600v12.600" stroke="#e0e0e0" stroke-width="1.100"/><rect x="134.900" y="808.500" width="1.800" height="1.800" fill="none" stroke="#d0d0d0" stroke-width=".7"/>
  <path d="M130.600 814h3.300M137.500 814h5" stroke="#4b8fe8" stroke-width="1.400"/>
  <path d="M129.300 817.300h4.600M137.500 817.300h4" stroke="#4b8fe8" stroke-width="1.400"/>
  <path d="M130.600 820.600h3.300M137.500 820.600h5.600" stroke="#30c489" stroke-width="1.500"/>
 </g>
 <use href="#seqic" y="23.600"/>
 <!-- bottom bar -->
 <path d="M78.600 891.700l1.300-4.300l8.200-8.100l3 3l-8.200 8.100z" fill="#2fc18c" stroke="#6a7a20" stroke-width=".6"/>
 <path d="M78.600 891.700l1.300-4.300l3 3z" fill="#1d1d1d" stroke="#8c9430" stroke-width=".7"/>
 <g fill="#dcdcdc"><rect x="108.500" y="880.700" width="4.900" height="3.900"/><rect x="108.500" y="886.500" width="4.900" height="3.900"/>
  <rect x="115.600" y="882.100" width="8.800" height="1.500"/><rect x="115.600" y="887.800" width="8.800" height="1.500"/></g>
 <g fill="#b8b8b8"><rect x="143.100" y="880.500" width="9.800" height="7.400"/><rect x="143.100" y="889.200" width="9.800" height="1.500" fill="#8a8a8a"/>
  <rect x="170.600" y="880.300" width="9" height="6" /><rect x="174.300" y="882.300" width="9.400" height="6.200" stroke="#1d1d1d" stroke-width=".8"/><rect x="178.600" y="884.400" width="9.600" height="6.200" stroke="#1d1d1d" stroke-width=".8"/></g>
 <circle cx="210.900" cy="885.500" r="4.200" fill="none" stroke="#c4c4c4" stroke-width="1.800"/>
 <path d="M220 885.500h60" stroke="#4a4a4a" stroke-width="1.500"/>
 <path d="M299.100 880.900h12.500M299.100 885.400h10.700M299.100 890h9" stroke="#7c7c7c" stroke-width="1.500"/>
 <g fill="#5e5e5e"><rect x="354.800" y="881.500" width="4.400" height="8"/><rect x="360.300" y="882.200" width="3.600" height="7.300"/><rect x="365" y="882.900" width="2.600" height="6.600"/><rect x="368.500" y="883.600" width="1.500" height="5.900"/></g>
 <path d="M387.300 879.900h4.600l.7 1.500h7.700v8.500h-13z" fill="#b8b8b8"/>
 <path d="M420.900 879.900h10.100v10h-6.700v-3.400h-3.400z" fill="#b8b8b8"/><path d="M421.300 887.400h2.200v2.200z" fill="#b8b8b8"/>
 <g fill="none" stroke="#565656" stroke-width="1.100"><path d="M451.500 881.300h10.400M454.800 881.300v-1.800h3.800v1.800M452.700 881.600l.6 9h6.800l.6-9M455.200 883.400v5.600M456.700 883.400v5.600M458.200 883.400v5.600"/></g>
</g>

<!-- tools panel -->
<g id="ic-tools" fill="#b4b4b4">
 <path d="M508.600 685.900l12.100 9.200l-6.400 1.100l-5.700 5.700z" fill="#ffffff"/>
 <rect x="504.700" y="719.900" width="9" height="9.400" fill="none" stroke="#b4b4b4" stroke-width="1.300" stroke-dasharray="2.400 1.500"/>
 <path d="M512.500 723.300h4.600v-2.700l4.600 4l-4.600 4v-2.700h-4.600z"/>
 <path d="M522.500 730.800v3h-3z"/>
 <path d="M512.400 749.200h1.700v14h-1.700z"/><path d="M504.200 756.200l6.300-4.200v2.900h1.300v2.600h-1.300v2.900zM522.200 756.200l-6.300-4.200v2.900h-1.300v2.600h1.300v2.900z"/>
 <path d="M522.500 761.800v3h-3z"/>
 <g transform="translate(513.700 788.300) rotate(38)"><rect x="-7.600" y="-4.400" width="15.200" height="8.800" rx=".8"/><path d="M-3.800 0l1-1l1 1l1-1l1 1l1-1l1 1l1-1l1 1l-1 1l-1-1l-1 1l-1-1l-1 1l-1-1l-1 1z" fill="#1d1d1d"/></g>
 <path d="M503.300 812.600v14M523.300 812.600v15.600" stroke="#b4b4b4" stroke-width="1.500" fill="none"/>
 <path d="M505.600 820.200l4-3.300v2.300h7.400v-2.300l4 3.300l-4 3.300v-2.300h-7.400v2.300z"/>
 <path d="M524.200 826.800v2.600h-2.600z"/>
 <g transform="translate(513.500 851.500) rotate(45)"><path d="M-3.400 -9.200h6.800v4.400h-6.800z"/><path d="M-3.600 -3.800h7.200l1.200 6.200l-4.800 8.400l-4.800-8.400z"/><path d="M0 10.600v-7" stroke="#1d1d1d" stroke-width=".9"/><circle cx="0" cy="2.600" r="1.300" fill="#1d1d1d"/></g>
 <rect x="506.200" y="876.700" width="14.400" height="11.400" fill="#3a3a3a" stroke="#b4b4b4" stroke-width="1.300"/>
 <path d="M523 890.200v3h-3z"/>
</g>

<!-- timeline header icons -->
<g id="ic-tl">
 <path d="M552.500 676.200l4.600 4.600M557.100 676.200l-4.600 4.600" stroke="#a8a8a8" stroke-width="1" fill="none"/>
 <g stroke="#cfcfcf" fill="none"><path d="M566.400 721.600v13.600" stroke-width="1.400"/><circle cx="566.400" cy="722.600" r="1" fill="#cfcfcf" stroke="none"/>
  <path d="M560.500 726.400h4.400M568 726.400h3.600M558.600 729.500h6.300M568 729.500h3.600M561.400 732.600h3.500M568 732.600h4.600" stroke-width="1.500"/></g>
 <path d="M593.200 733.800v-5.600a4.100 4.100 0 0 1 8.200 0v5.600" fill="none" stroke="#cfcfcf" stroke-width="2.300"/>
 <path d="M592 731.400h2.400v2.600H592zM600.200 731.400h2.400v2.600h-2.400z" fill="#8a8a8a"/>
 <g fill="#d6d6d6"><rect x="621.600" y="723.300" width="3.600" height="4.600"/><rect x="621.600" y="729.600" width="3.600" height="4" fill="none" stroke="#d6d6d6" stroke-width=".9"/>
  <rect x="626.400" y="723.300" width="9.200" height="4.600"/><path d="M626.600 723l9.600 6.900l-4.700.6l-3.700 4.800z" stroke="#4a4a4a" stroke-width=".8"/></g>
 <path d="M656.300 725.300h7.600v4.400l-3.800 4l-3.800-4z" fill="#c0c0c0"/>
 <use href="#wrench" transform="translate(-210.100 170.900)"/>
 <rect x="715.300" y="724.400" width="15.700" height="9.700" rx="1.800" fill="#4e4e4e"/>
 <g fill="none" stroke="#1d1d1d" stroke-width="1.300"><path d="M722.200 727.300a2.300 2.300 0 1 0 0 3.900M728.600 727.300a2.300 2.300 0 1 0 0 3.900"/></g>
</g>

<!-- track header icons (V2 row defined, reused) -->
<defs>
 <g id="lock"><rect x="584.900" y="762" width="10.300" height="6.800" rx=".6" fill="#c0c0c0"/><path d="M587.300 762.400v-2.300a2.800 2.800 0 0 1 5.500 -.8" fill="none" stroke="#c0c0c0" stroke-width="1.400"/><rect x="589.400" y="764.200" width="1.400" height="2.700" fill="#1d1d1d"/></g>
 <g id="synclock" fill="none" stroke="#c0c0c0" stroke-width="1.100"><rect x="630.800" y="759" width="7.300" height="3.300"/><rect x="630.800" y="764" width="7.300" height="3.300"/><path d="M638.100 760.600h1.600M638.100 765.700h1.600"/><path d="M641.700 759v8.300l-2.200-1.400v-5.500z" fill="#c0c0c0" stroke-width=".6"/></g>
 <g id="eye"><path d="M653.300 764q6.300-8 12.700 0q-6.400 8-12.700 0z" fill="#c8c8c8"/><circle cx="659.700" cy="764" r="2.700" fill="#1d1d1d"/><circle cx="659.700" cy="764" r="1.100" fill="#c8c8c8"/></g>
 <g id="mic"><rect x="704.400" y="830.400" width="5" height="9.600" rx="2.500" fill="#c0c0c0"/><path d="M702.600 836.200a4.300 4.300 0 0 0 8.600 0M706.900 840.600v2.800M704.400 843.500h5" fill="none" stroke="#c0c0c0" stroke-width="1"/></g>
</defs>
<use href="#lock"/><use href="#synclock"/><use href="#eye"/>
<use href="#lock" y="40.300"/><use href="#synclock" y="40.300"/><use href="#eye" y="40.300"/>
<use href="#lock" y="73.600"/><use href="#synclock" y="73.600"/><use href="#mic"/>
<g clip-path="url(#cpA2)"><use href="#lock" y="114"/><use href="#synclock" y="114"/><use href="#mic" y="41"/></g>
<defs><clipPath id="cpA2"><rect x="540" y="858" width="210" height="23.700"/></clipPath></defs>
</svg>

<!-- text -->
<span class="t" style="left:213.25px;top:51.00px;font-size:13px;color:#c4c4c4;font-weight:400;letter-spacing:0.193px;">Import</span>
<span class="t" style="left:276.25px;top:51.00px;font-size:13px;color:#ececec;font-weight:400;letter-spacing:-0.414px;">Edit</span>
<span class="t" style="left:321.75px;top:51.00px;font-size:13px;color:#c4c4c4;font-weight:400;letter-spacing:-0.180px;">Export</span>
<span class="t" style="left:746.25px;top:51.00px;font-size:13px;color:#d4d4d4;font-weight:400;letter-spacing:-0.361px;">ExtensionTesting_4</span>
<span class="t" style="left:1273.00px;top:52.61px;font-size:10.5px;color:#d4d4d4;font-weight:400;letter-spacing:-0.299px;">EDITING</span>
<span class="t" style="left:68.25px;top:82.27px;font-size:11.5px;color:#d0d0d0;font-weight:400;letter-spacing:-0.456px;">Program: Extension sequence</span>
<span class="t" style="left:76.25px;top:551.50px;font-size:13px;color:#4a9bf3;font-weight:700;letter-spacing:0.379px;">00;00;00;25</span>
<span class="t" style="left:183.75px;top:552.77px;font-size:11.5px;color:#d8d8d8;font-weight:400;letter-spacing:-0.510px;">Fit</span>
<span class="t" style="left:825.00px;top:552.77px;font-size:11.5px;color:#d8d8d8;font-weight:400;letter-spacing:-0.233px;">1/2</span>
<span class="t" style="left:921.50px;top:551.50px;font-size:13px;color:#cfcfcf;font-weight:700;letter-spacing:0.379px;">00;00;27;08</span>
<span class="t" style="left:1045.00px;top:82.27px;font-size:11.5px;color:#d0d0d0;font-weight:400;letter-spacing:-0.619px;">sync.</span>
<span class="t" style="left:1221.50px;top:465.12px;font-size:19px;color:#ffffff;font-weight:700;letter-spacing:-0.313px;">sign in to sync.</span>
<span class="t" style="left:1133.00px;top:496.77px;font-size:13.5px;color:#a3a3a3;font-weight:400;letter-spacing:0.413px;">connect your account to use sync. in premier pro</span>
<span class="t" style="left:1267.40px;top:545.35px;font-size:14px;color:#ffffff;font-weight:400;letter-spacing:0.247px;">sign in</span>
<span class="t" style="left:91.60px;top:672.77px;font-size:11.5px;color:#b4b4b4;font-weight:400;letter-spacing:-0.197px;">Info</span>
<span class="t" style="left:150.70px;top:672.77px;font-size:11.5px;color:#b4b4b4;font-weight:400;letter-spacing:-0.522px;">Effects</span>
<span class="t" style="left:223.90px;top:672.77px;font-size:11.5px;color:#b4b4b4;font-weight:400;letter-spacing:-0.433px;">Markers</span>
<span class="t" style="left:303.40px;top:672.77px;font-size:11.5px;color:#e4e4e4;font-weight:400;letter-spacing:-0.401px;">Project: ExtensionTesting_4</span>
<span class="t" style="left:103.00px;top:699.77px;font-size:11.5px;color:#c4c4c4;font-weight:400;letter-spacing:-0.394px;">ExtensionTesting_4.prproj</span>
<span class="t" style="left:434.00px;top:731.27px;font-size:11.5px;color:#c4c4c4;font-weight:400;letter-spacing:-0.354px;">8 items</span>
<span class="t" style="left:105.00px;top:763.57px;font-size:11.5px;color:#c4c4c4;font-weight:400;letter-spacing:-0.572px;">Name</span>
<span class="t" style="left:301.70px;top:763.57px;font-size:11.5px;color:#c4c4c4;font-weight:400;letter-spacing:-0.682px;">Frame Rate</span>
<span class="t" style="left:400.70px;top:763.57px;font-size:11.5px;color:#c4c4c4;font-weight:400;letter-spacing:-0.531px;">Media Star</span>
<span class="t" style="left:152.90px;top:787.27px;font-size:11.5px;color:#d0d0d0;font-weight:400;letter-spacing:-0.359px;">sync. outputs</span>
<span class="t" style="left:153.00px;top:811.27px;font-size:11.5px;color:#d0d0d0;font-weight:400;letter-spacing:-0.477px;">Extension sequence</span>
<span class="t" style="left:302.50px;top:811.27px;font-size:11.5px;color:#d0d0d0;font-weight:400;letter-spacing:-0.536px;">29,97 fps</span>
<span class="t" style="left:403.00px;top:811.27px;font-size:11.5px;color:#d0d0d0;font-weight:400;letter-spacing:-0.402px;">00;00;(</span>
<span class="t" style="left:153.00px;top:834.77px;font-size:11.5px;color:#d0d0d0;font-weight:400;letter-spacing:-0.477px;">Extension sequence</span>
<span class="t" style="left:302.50px;top:834.77px;font-size:11.5px;color:#d0d0d0;font-weight:400;letter-spacing:-0.536px;">29,97 fps</span>
<span class="t" style="left:403.00px;top:834.77px;font-size:11.5px;color:#d0d0d0;font-weight:400;letter-spacing:-0.402px;">00;00;(</span>
<span class="t" style="left:587.50px;top:672.77px;font-size:11.5px;color:#d4d4d4;font-weight:400;letter-spacing:-0.504px;">Extension sequence</span>
<span class="t" style="left:559.00px;top:697.00px;font-size:13px;color:#4a9bf3;font-weight:700;letter-spacing:0.379px;">00;00;00;25</span>
<span class="t" style="left:743.75px;top:722.69px;font-size:11px;color:#c0c0c0;font-weight:400;letter-spacing:-0.307px;">;00;00</span>
<span class="t" style="left:848.75px;top:722.69px;font-size:11px;color:#c0c0c0;font-weight:400;letter-spacing:-0.216px;">00;00;16;00</span>
<span class="t" style="left:981.75px;top:722.69px;font-size:11px;color:#c0c0c0;font-weight:400;letter-spacing:-0.216px;">00;00;32;00</span>
<span class="t" style="left:1113.75px;top:722.69px;font-size:11px;color:#c0c0c0;font-weight:400;letter-spacing:-0.216px;">00;00;48;00</span>
<span class="t" style="left:1246.50px;top:722.69px;font-size:11px;color:#c0c0c0;font-weight:400;letter-spacing:-0.239px;">00;01;04;02</span>
<span class="t" style="left:1379.50px;top:722.69px;font-size:11px;color:#c0c0c0;font-weight:400;letter-spacing:-0.193px;clip-path:inset(0 1.5px 0 0);">00;01;20;02</span>
<span class="t" style="left:751.25px;top:787.69px;font-size:11px;color:#e6e6e6;font-weight:400;letter-spacing:-0.572px;">Extension sequence [V]</span>
<span class="t" style="left:1517.00px;top:699.03px;font-size:10px;color:#b8b8b8;font-weight:400;letter-spacing:-0.062px;">0</span>
<span class="t" style="left:1516.30px;top:732.53px;font-size:10px;color:#b8b8b8;font-weight:400;letter-spacing:-0.051px;">-12</span>
<span class="t" style="left:1516.30px;top:766.03px;font-size:10px;color:#b8b8b8;font-weight:400;letter-spacing:-0.051px;">-24</span>
<span class="t" style="left:1516.30px;top:800.03px;font-size:10px;color:#b8b8b8;font-weight:400;letter-spacing:-0.051px;">-36</span>
<span class="t" style="left:1516.30px;top:833.53px;font-size:10px;color:#b8b8b8;font-weight:400;letter-spacing:-0.051px;">-48</span>
<span class="t" style="left:1517.00px;top:863.53px;font-size:10px;color:#b8b8b8;font-weight:400;letter-spacing:-0.367px;">dB</span>
<span class="t" style="left:1479.30px;top:881.30px;font-size:8.5px;color:#a8a8a8;font-weight:400;letter-spacing:-0.472px;">S</span>
<span class="t" style="left:1497.00px;top:881.30px;font-size:8.5px;color:#a8a8a8;font-weight:400;letter-spacing:-0.472px;">S</span>
<span class="t" style="left:607.00px;top:758.61px;font-size:10.5px;color:#c0c0c0;font-weight:400;letter-spacing:-0.922px;">V2</span>
<span class="t" style="left:559.50px;top:798.61px;font-size:10.5px;color:#ffffff;font-weight:400;letter-spacing:-0.922px;">V1</span>
<span class="t" style="left:607.00px;top:798.61px;font-size:10.5px;color:#ffffff;font-weight:400;letter-spacing:-0.922px;">V1</span>
<span class="t" style="left:559.50px;top:832.36px;font-size:10.5px;color:#ffffff;font-weight:400;letter-spacing:-0.922px;">A1</span>
<span class="t" style="left:607.00px;top:832.36px;font-size:10.5px;color:#ffffff;font-weight:400;letter-spacing:-0.922px;">A1</span>
<span class="t" style="left:656.00px;top:832.36px;font-size:10.5px;color:#a8a8a8;font-weight:400;letter-spacing:-0.250px;">M</span>
<span class="t" style="left:680.75px;top:832.36px;font-size:10.5px;color:#a8a8a8;font-weight:400;letter-spacing:-0.766px;">S</span>
<span class="t" style="left:607.00px;top:872.61px;font-size:10.5px;color:#ffffff;font-weight:400;letter-spacing:-0.922px;clip-path:inset(0 0 1.4px 0);">A2</span>
<span class="t" style="left:656.00px;top:872.61px;font-size:10.5px;color:#a8a8a8;font-weight:400;letter-spacing:-0.250px;clip-path:inset(0 0 1.4px 0);">M</span>
<span class="t" style="left:680.75px;top:872.61px;font-size:10.5px;color:#a8a8a8;font-weight:400;letter-spacing:-0.766px;clip-path:inset(0 0 1.4px 0);">S</span>
<span class="t" style="left:949.50px;top:787.61px;font-size:10.5px;color:#6f7a36;font-weight:400;letter-spacing:-0.086px;font-style:italic;">fx</span>
<span class="t" style="left:949.50px;top:820.61px;font-size:10.5px;color:#6f7a36;font-weight:400;letter-spacing:-0.086px;font-style:italic;">fx</span>
</div>
</body>
</html>
